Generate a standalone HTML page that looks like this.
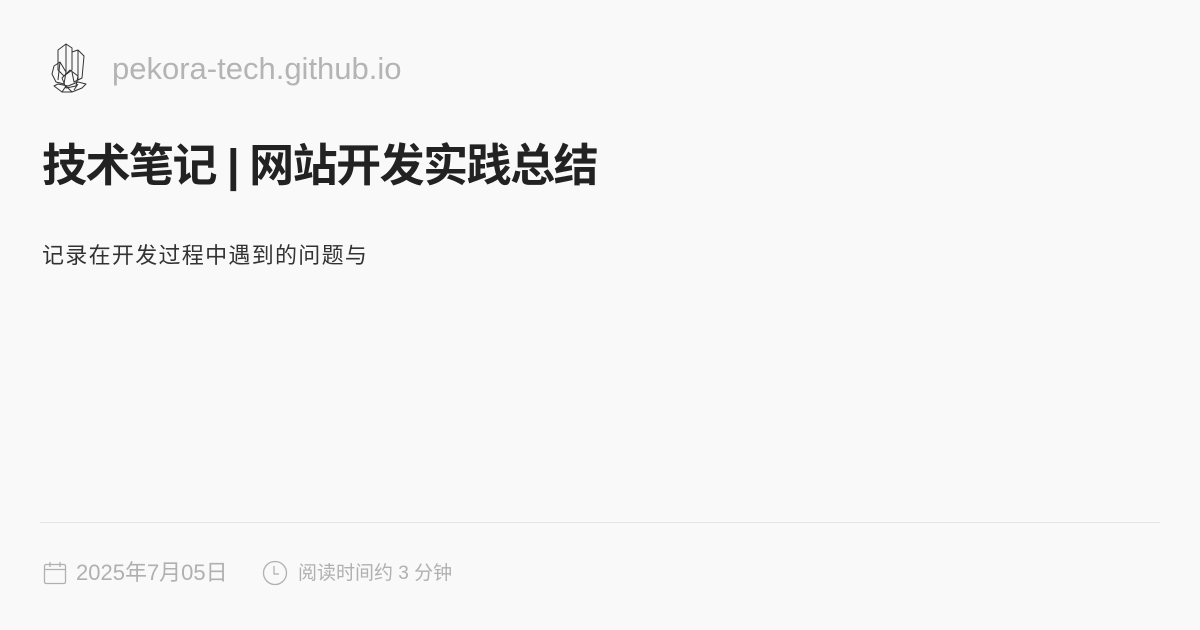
<!DOCTYPE html>
<html><head><meta charset="utf-8"><style>
html,body{margin:0;padding:0}
body{width:1200px;height:630px;background:#faf9fa;position:relative;overflow:hidden;font-family:"Liberation Sans","Noto Sans CJK SC",sans-serif}
.site{position:absolute;left:112px;top:50px;font-size:31px;color:#b4b4b4;line-height:38px}
.logo{position:absolute;left:48px;top:42px}
.title{position:absolute;left:42px;top:135px;font-size:45px;font-weight:bold;color:#222;line-height:62px;letter-spacing:-1.5px;white-space:nowrap}
.sub{position:absolute;left:42px;top:240px;font-size:22px;color:#333;line-height:32px;letter-spacing:1.3px;white-space:nowrap}
.line{position:absolute;left:40px;top:522px;width:1120px;height:1px;background:#e6e5e6}
.foot{position:absolute;top:558px;font-size:22px;color:#b0b0b0;line-height:30px;white-space:nowrap}
</style></head><body>
<svg class="logo" width="40" height="52" viewBox="0 0 40 52" fill="none" stroke="#333" stroke-width="1" stroke-linejoin="round">
<path d="M10 8 L18 2 L24 6 L24 28 L16 34 L10 28 Z"/>
<path d="M18 2 L18 30"/>
<path d="M24 10 L30 8 L36 14 L34 36 L26 40 L24 30"/>
<path d="M30 8 L30 38"/>
<path d="M6 24 L12 20 L18 30 L16 42 L8 40 L4 32 Z"/>
<path d="M12 20 L10 38"/>
<path d="M14 36 L22 28 L30 34 L28 44 L18 46 Z"/>
<path d="M6 44 L14 50 L24 50 L34 46 L38 42 L30 40 L20 44 L10 42 Z"/>
<path d="M14 50 L18 44 L24 50 M26 48 L30 42"/>
</svg>
<div class="site">pekora-tech.github.io</div>
<div class="title">技术笔记 | 网站开发实践总结</div>
<div class="sub">记录在开发过程中遇到的问题与</div>
<div class="line"></div>
<svg style="position:absolute;left:43px;top:561px" width="24" height="24" viewBox="0 0 24 24" fill="none" stroke="#b0b0b0" stroke-width="1.3"><rect x="1.5" y="3.5" width="21" height="19" rx="1.5"/><path d="M1.5 8.5h21M7 1v5M17 1v5"/></svg>
<div class="foot" style="left:76px">2025年7月05日</div>
<svg style="position:absolute;left:262px;top:560px" width="26" height="26" viewBox="0 0 26 26" fill="none" stroke="#b0b0b0" stroke-width="1.3"><circle cx="13" cy="13" r="11.5"/><path d="M12 6v8h5"/></svg>
<div class="foot" style="left:298px;font-size:19px;top:559px">阅读时间约 3 分钟</div>
</body></html>
